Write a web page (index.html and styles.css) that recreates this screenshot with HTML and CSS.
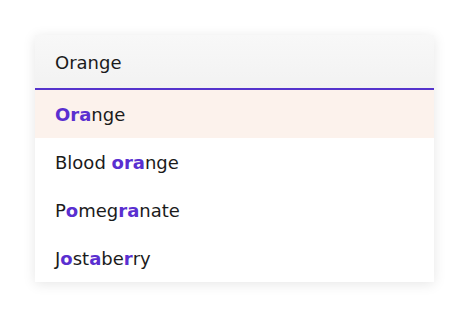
FILE: index.html
```html
<!DOCTYPE html>
<html>
<head>
<meta charset="utf-8">
<link rel="stylesheet" href="styles.css">
</head>
<body>
<div class="combo">
  <div class="input">Orange</div>
  <ul class="list">
    <li class="item active"><b>Ora</b>nge</li>
    <li class="item">Blood <b>ora</b>nge</li>
    <li class="item">P<b>o</b>meg<b>ra</b>nate</li>
    <li class="item">J<b>o</b>st<b>a</b>be<b>r</b>ry</li>
  </ul>
</div>
</body>
</html>
```
FILE: styles.css
```css
html, body {
  margin: 0;
  padding: 0;
  background: #ffffff;
}
body {
  width: 474px;
  height: 316px;
  font-family: "DejaVu Sans", "Noto Sans", sans-serif;
  color: #1b1b1b;
}
.combo {
  margin: 35px 0 0 35px;
  width: 399px;
  background: #fff;
  box-shadow: 0 2px 12px rgba(0,0,0,0.10);
}
.input {
  height: 53px;
  line-height: 55px;
  padding: 0 20px;
  font-size: 18px;
  background: linear-gradient(#f8f8f8, #f2f2f2);
  border-bottom: 2px solid #5533cc;
}
.list {
  list-style: none;
  margin: 0;
  padding: 0;
}
.item {
  height: 48px;
  line-height: 50px;
  padding: 0 20px;
  font-size: 18px;
}
.item.active {
  background: #fcf2ec;
}
.item b {
  color: #5a2fd0;
  font-weight: 700;
}
```
